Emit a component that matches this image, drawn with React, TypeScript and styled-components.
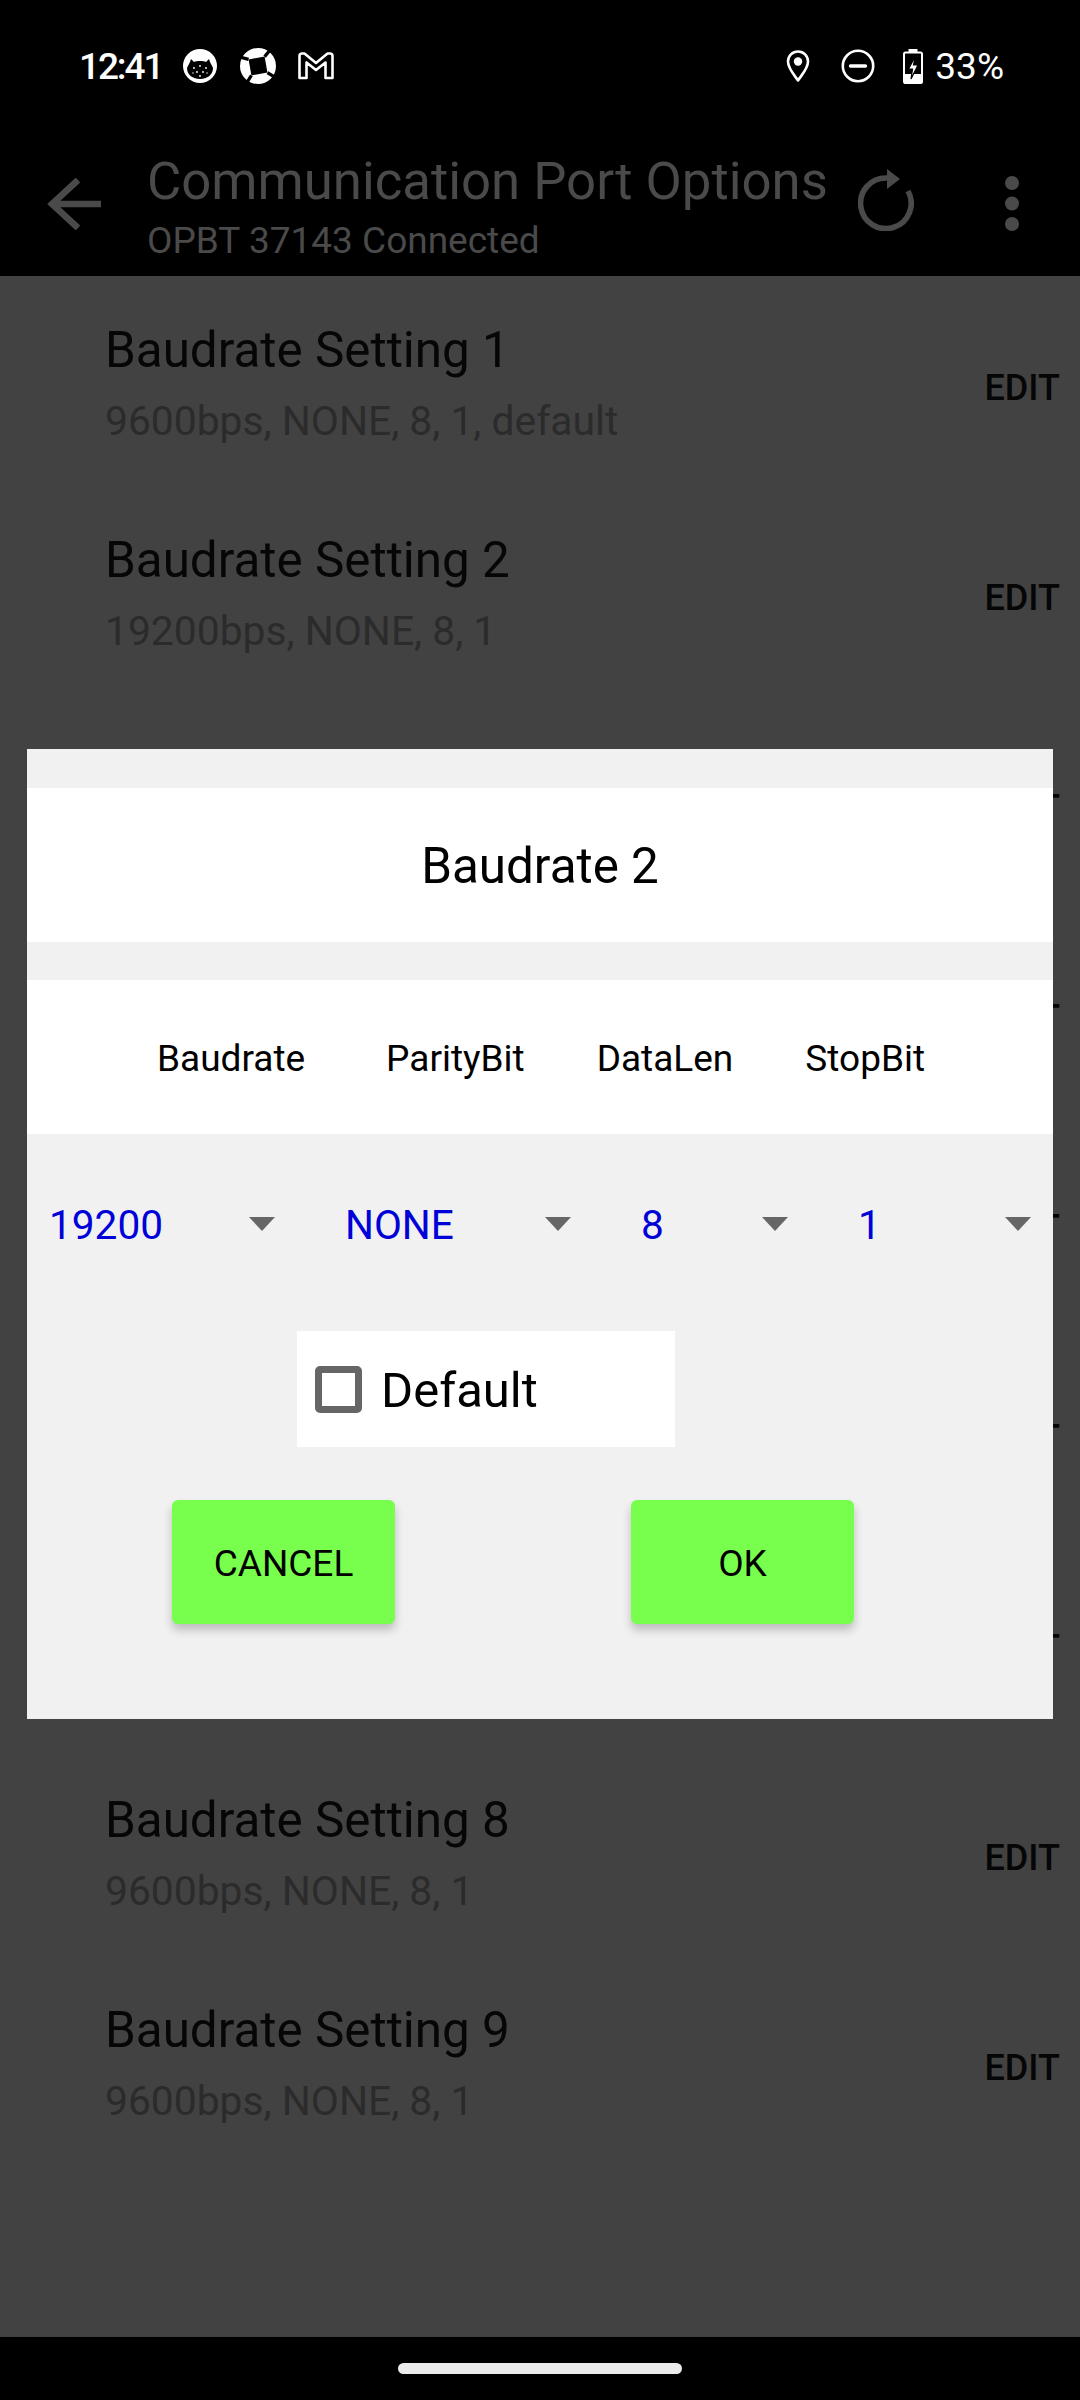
import React from "react";
import styled, { createGlobalStyle } from "styled-components";

const Global = createGlobalStyle`
  html, body { margin: 0; padding: 0; background: #000; }
  * { box-sizing: border-box; }
  body { font-family: Roboto, "Liberation Sans", sans-serif; }
`;

const Screen = styled.div`
  position: relative;
  width: 1080px;
  height: 2400px;
  display: flex;
  flex-direction: column;
  background: #424242;
  overflow: hidden;
`;

const StatusBar = styled.header`
  height: 132px;
  flex: none;
  background: #000;
  color: #fff;
  display: flex;
  align-items: center;
  padding: 0 76px 0 79px;
`;

const Clock = styled.span`
  font-size: 37px;
  font-weight: 500;
  letter-spacing: -2.1px;
  width: 104px;
  line-height: 1;
`;

const StatusIcon = styled.svg<{ $gap?: number }>`
  display: block;
  flex: none;
  margin-left: ${(p) => p.$gap ?? 0}px;
`;

const Spacer = styled.div`
  flex: 1;
`;

const Percent = styled.span`
  font-size: 37px;
  line-height: 1;
  margin-left: 12px;
`;

const AppBar = styled.div`
  height: 144px;
  flex: none;
  background: #000;
  color: #4a4a4a;
  display: flex;
  align-items: flex-start;
  padding-left: 47px;
`;

const BackIcon = styled.svg`
  flex: none;
  margin-top: 46px;
`;

const Titles = styled.div`
  width: 711px;
  flex: none;
  margin-left: 46px;
  padding-top: 19px;
`;

const AppTitle = styled.div`
  font-size: 52.7px;
  line-height: 60px;
  white-space: nowrap;
`;

const AppSubtitle = styled.div`
  font-size: 37px;
  line-height: 42px;
  margin-top: 9px;
  white-space: nowrap;
`;

const RefreshIcon = styled.svg`
  flex: none;
  margin-top: 36px;
`;

const MoreIcon = styled.svg`
  flex: none;
  margin: 44px 0 0 91px;
`;

const List = styled.main`
  flex: 1;
`;

const Row = styled.div`
  height: 210px;
  display: flex;
  align-items: flex-start;
  justify-content: space-between;
  padding: 0 20px 0 105px;
`;

const RowText = styled.div`
  padding-top: 44px;
`;

const RowTitle = styled.div`
  font-size: 49.4px;
  line-height: 60px;
  color: #060606;
`;

const RowDetail = styled.div`
  font-size: 40.8px;
  line-height: 46px;
  margin-top: 18px;
  color: #2b2b2b;
`;

const EditLabel = styled.div`
  font-size: 36px;
  font-weight: 500;
  line-height: 40px;
  margin-top: 92px;
  color: #060606;
`;

const NavBar = styled.footer`
  height: 63px;
  flex: none;
  background: #000;
  display: flex;
  justify-content: center;
  padding-top: 26px;
`;

const HomePill = styled.div`
  width: 284px;
  height: 11px;
  border-radius: 6px;
  background: #ebebeb;
`;

/* Modal sits on top of the dimmed list */
const Dialog = styled.section`
  position: absolute;
  left: 27px;
  top: 749px;
  width: 1026px;
  height: 970px;
  background: #f1f1f1;
  padding-top: 39px;
`;

const DialogTitle = styled.h2`
  margin: 0;
  height: 154px;
  background: #fff;
  display: flex;
  align-items: center;
  justify-content: center;
  padding-top: 2px;
  font-size: 49.4px;
  font-weight: 400;
  color: #000;
`;

const ColumnHeader = styled.div`
  margin-top: 38px;
  height: 154px;
  background: #fff;
  display: flex;
  align-items: center;
  padding: 2px 0 0 130px;
`;

const ColumnLabel = styled.span<{ $gap: number }>`
  margin-left: ${(p) => p.$gap}px;
  font-size: 37px;
  color: #000;
`;

const SpinnerRow = styled.div`
  height: 180px;
  display: flex;
  align-items: center;
`;

const Spinner = styled.div<{ $width: number; $arrowInset: number }>`
  width: ${(p) => p.$width}px;
  flex: none;
  display: flex;
  align-items: center;
  justify-content: space-between;
  padding: 0 ${(p) => p.$arrowInset}px 0 22px;
`;

const SpinnerValue = styled.span`
  font-size: 40.6px;
  line-height: 50px;
  padding-top: 2px;
  color: #0000d8;
`;

const SpinnerArrow = styled.span`
  width: 0;
  height: 0;
  border-left: 13.5px solid transparent;
  border-right: 13.5px solid transparent;
  border-top: 14px solid #666;
`;

const CheckRow = styled.label`
  margin: 17px 0 0 270px;
  width: 378px;
  height: 116px;
  background: #fff;
  display: flex;
  align-items: center;
  gap: 19px;
  padding-left: 18px;
`;

const CheckSquare = styled.span`
  width: 47px;
  height: 47px;
  border: 7px solid #666;
  border-radius: 5px;
`;

const CheckText = styled.span`
  font-size: 49px;
  padding-top: 3px;
  color: #000;
`;

const Actions = styled.div`
  margin-top: 53px;
  display: flex;
  gap: 236px;
  padding-left: 145px;
`;

const ActionButton = styled.button`
  width: 223px;
  height: 124px;
  border: 0;
  border-radius: 6px;
  padding: 2px 0 0;
  background: #78ff4e;
  box-shadow: 0 6px 10px rgba(0, 0, 0, 0.22);
  font-family: inherit;
  font-size: 37px;
  color: #000;
`;

const settings = [
  "9600bps, NONE, 8, 1, default",
  "19200bps, NONE, 8, 1",
  "9600bps, NONE, 8, 1",
  "9600bps, NONE, 8, 1",
  "9600bps, NONE, 8, 1",
  "9600bps, NONE, 8, 1",
  "9600bps, NONE, 8, 1",
  "9600bps, NONE, 8, 1",
  "9600bps, NONE, 8, 1",
];

const columns = [
  { label: "Baudrate", gap: 0 },
  { label: "ParityBit", gap: 81 },
  { label: "DataLen", gap: 72 },
  { label: "StopBit", gap: 72 },
];

const spinners = [
  { value: "19200", width: 296, inset: 48 },
  { value: "NONE", width: 296, inset: 48 },
  { value: "8", width: 217, inset: 48 },
  { value: "1", width: 217, inset: 22 },
];

const CatBadge = () => (
  <StatusIcon width="34" height="36" viewBox="0 0 34 36">
    <circle cx="17" cy="18" r="17" fill="#fff" />
    <path
      d="M4 20C5 17 7 15 8 11L11 14C14 12.6 20 12.6 23 14L26 11C27 15 29 17 30 20C30 27 24 31 17 31S4 27 4 20Z"
      fill="#000"
    />
    <g fill="#fff">
      <circle cx="11" cy="20" r="0.9" />
      <circle cx="17" cy="18" r="0.9" />
      <circle cx="23" cy="20" r="0.9" />
      <circle cx="14" cy="24" r="0.9" />
      <circle cx="20" cy="24" r="0.9" />
      <circle cx="17" cy="28" r="0.9" />
      <circle cx="10" cy="25" r="0.7" />
      <circle cx="24" cy="25" r="0.7" />
    </g>
  </StatusIcon>
);

/* White disc cut by a tilted black square, with a slit leaving each corner */
const PinwheelBadge = () => (
  <StatusIcon $gap={23} width="36" height="36" viewBox="0 0 36 36">
    <circle cx="18" cy="18" r="18" fill="#fff" />
    <path d="M24.6 8.6L27.4 24.6L11.4 27.4L8.6 11.4Z" fill="#000" />
    <g stroke="#000" strokeWidth="3.2">
      <path d="M24.6 8.6L31 1" />
      <path d="M27.4 24.6L36 30" />
      <path d="M11.4 27.4L6 36" />
      <path d="M8.6 11.4L0 9" />
    </g>
  </StatusIcon>
);

const MailBadge = () => (
  <StatusIcon $gap={22} width="36" height="28" viewBox="0 0 36 28">
    <path
      d="M1.5 26V4Q1.5 1.5 4 1.5H6.5L18 11L29.5 1.5H32Q34.5 1.5 34.5 4V26H27.5V10.5L18 18L8.5 10.5V26Z"
      fill="none"
      stroke="#fff"
      strokeWidth="2.6"
      strokeLinejoin="round"
    />
  </StatusIcon>
);

const PinGlyph = () => (
  <StatusIcon width="24" height="34" viewBox="0 0 24 34">
    <path
      d="M12 31.5C8 25.5 2 19.5 2 12.5A10 10 0 0 1 22 12.5C22 19.5 16 25.5 12 31.5Z"
      fill="none"
      stroke="#fff"
      strokeWidth="2.6"
      strokeLinejoin="round"
    />
    <circle cx="12" cy="12.5" r="4.2" fill="#fff" />
  </StatusIcon>
);

const MuteGlyph = () => (
  <StatusIcon $gap={31} width="34" height="34" viewBox="0 0 34 34">
    <circle cx="17" cy="17" r="15.2" fill="none" stroke="#fff" strokeWidth="2.6" />
    <path d="M9.5 17H24.5" stroke="#fff" strokeWidth="3.4" strokeLinecap="round" />
  </StatusIcon>
);

const BatteryGlyph = () => (
  <StatusIcon $gap={28} width="20" height="35" viewBox="0 0 20 35">
    <path d="M5.5 0H14.5V3H5.5Z" fill="#fff" />
    <rect x="1" y="3.5" width="18" height="30.5" rx="1.5" fill="#000" stroke="#fff" strokeWidth="2" />
    <rect x="1" y="25" width="18" height="10" rx="1.5" fill="#fff" />
    <path d="M12.5 7L5.5 20H9.5L8 30L15 16H10.5Z" fill="#fff" stroke="#000" strokeWidth="1.2" />
  </StatusIcon>
);

export default function App() {
  return (
    <Screen>
      <Global />
      <StatusBar>
        <Clock>12:41</Clock>
        <CatBadge />
        <PinwheelBadge />
        <MailBadge />
        <Spacer />
        <PinGlyph />
        <MuteGlyph />
        <BatteryGlyph />
        <Percent>33%</Percent>
      </StatusBar>
      <AppBar>
        <BackIcon width="54" height="52" viewBox="0 0 54 52">
          <path
            d="M54 26H5M31 2L5 26L31 50"
            fill="none"
            stroke="#4a4a4a"
            strokeWidth="6.5"
          />
        </BackIcon>
        <Titles>
          <AppTitle>Communication Port Options</AppTitle>
          <AppSubtitle>OPBT 37143 Connected</AppSubtitle>
        </Titles>
        <RefreshIcon width="56" height="63" viewBox="0 0 56 63">
          <path
            d="M50 23A25.3 25.3 0 1 1 29 10"
            fill="none"
            stroke="#4a4a4a"
            strokeWidth="5.6"
          />
          <path d="M29 1L42 11L29 21Z" fill="#4a4a4a" />
        </RefreshIcon>
        <MoreIcon width="14" height="55" viewBox="0 0 14 55">
          <circle cx="7" cy="7" r="7" fill="#4a4a4a" />
          <circle cx="7" cy="27.5" r="7" fill="#4a4a4a" />
          <circle cx="7" cy="48" r="7" fill="#4a4a4a" />
        </MoreIcon>
      </AppBar>
      <List>
        {settings.map((detail, i) => (
          <Row key={i}>
            <RowText>
              <RowTitle>Baudrate Setting {i + 1}</RowTitle>
              <RowDetail>{detail}</RowDetail>
            </RowText>
            <EditLabel>EDIT</EditLabel>
          </Row>
        ))}
      </List>
      <NavBar>
        <HomePill />
      </NavBar>
      <Dialog>
        <DialogTitle>Baudrate 2</DialogTitle>
        <ColumnHeader>
          {columns.map((c) => (
            <ColumnLabel key={c.label} $gap={c.gap}>
              {c.label}
            </ColumnLabel>
          ))}
        </ColumnHeader>
        <SpinnerRow>
          {spinners.map((s) => (
            <Spinner key={s.value} $width={s.width} $arrowInset={s.inset}>
              <SpinnerValue>{s.value}</SpinnerValue>
              <SpinnerArrow />
            </Spinner>
          ))}
        </SpinnerRow>
        <CheckRow>
          <CheckSquare />
          <CheckText>Default</CheckText>
        </CheckRow>
        <Actions>
          <ActionButton>CANCEL</ActionButton>
          <ActionButton>OK</ActionButton>
        </Actions>
      </Dialog>
    </Screen>
  );
}
